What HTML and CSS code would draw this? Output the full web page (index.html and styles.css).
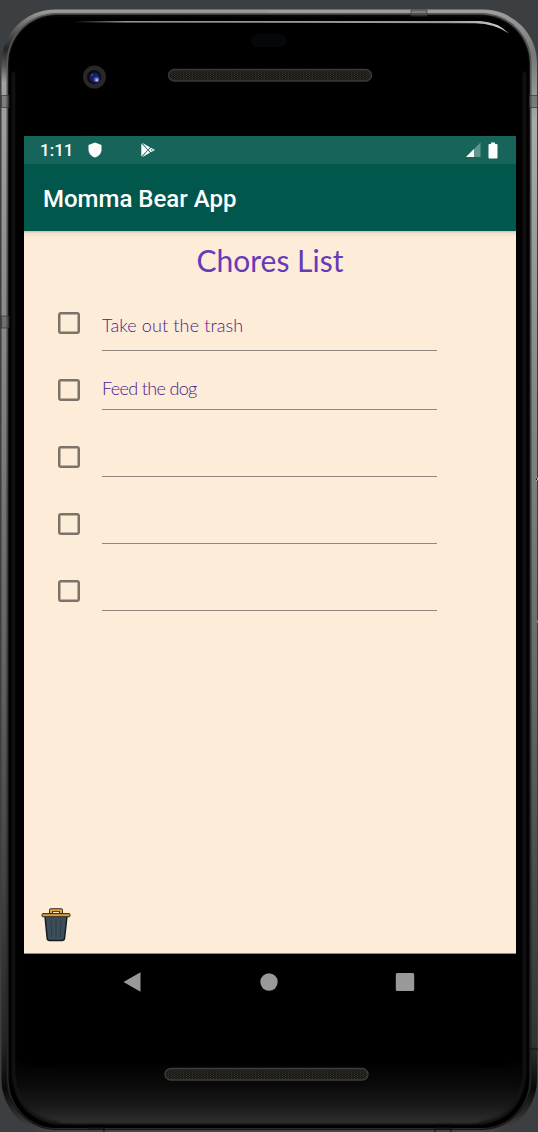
FILE: index.html
```html
<!DOCTYPE html>
<html lang="en">
<head>
<meta charset="utf-8">
<title>Momma Bear App</title>
<link rel="stylesheet" href="styles.css">
</head>
<body>
<div class="device">
  <svg class="shell" viewBox="0 0 538 1132" aria-hidden="true">
    <defs>
      <linearGradient id="rail" x1="0" y1="0" x2="0" y2="1">
        <stop offset="0" stop-color="#a0a09e"/><stop offset=".02" stop-color="#555"/><stop offset=".035" stop-color="#252525"/><stop offset=".05" stop-color="#555"/><stop offset=".065" stop-color="#a2a2a2"/><stop offset=".35" stop-color="#808080"/><stop offset=".6" stop-color="#606060"/><stop offset=".78" stop-color="#424242"/><stop offset=".92" stop-color="#252525"/><stop offset=".96" stop-color="#090909"/><stop offset="1" stop-color="#4a4746"/>
      </linearGradient>
      <linearGradient id="railRight" x1="0" y1="0" x2="0" y2="1">
        <stop offset="0" stop-color="#a0a09e"/><stop offset=".04" stop-color="#777"/><stop offset=".1" stop-color="#aaa"/><stop offset=".35" stop-color="#858585"/><stop offset=".6" stop-color="#686868"/><stop offset=".78" stop-color="#4a4a4a"/><stop offset=".92" stop-color="#333"/><stop offset=".96" stop-color="#090909"/><stop offset="1" stop-color="#4a4746"/>
      </linearGradient>
      <linearGradient id="inner" x1="0" y1="0" x2="0" y2="1">
        <stop offset="0" stop-color="#555"/><stop offset=".1" stop-color="#505050"/><stop offset=".6" stop-color="#303030"/><stop offset="1" stop-color="#161616"/>
      </linearGradient>
      <linearGradient id="chin" x1="0" y1="0" x2="0" y2="1">
        <stop offset="0" stop-color="#000"/><stop offset=".4" stop-color="#090909"/><stop offset=".75" stop-color="#1a1a1a"/><stop offset="1" stop-color="#303030"/>
      </linearGradient>
      <linearGradient id="shine" x1="0" y1="0" x2="1" y2="0">
        <stop offset="0" stop-color="#8e9292" stop-opacity="0"/><stop offset=".12" stop-color="#8e9292"/><stop offset=".85" stop-color="#969a9a"/><stop offset="1" stop-color="#c8d0ce"/>
      </linearGradient>
      <pattern id="mesh" width="3" height="2" patternUnits="userSpaceOnUse">
        <rect width="3" height="2" fill="#181714"/><path d="M.5 0v1M2 1v1" stroke="#393530" stroke-width="1"/>
      </pattern>
      <filter id="soft" x="-20%" y="-20%" width="140%" height="140%" color-interpolation-filters="sRGB"><feGaussianBlur stdDeviation="1.3"/></filter>
      <clipPath id="leftHalf"><rect width="269" height="1140"/></clipPath>
      <clipPath id="rightHalf"><rect x="269" width="269" height="1140"/></clipPath>
    </defs>
    <g clip-path="url(#leftHalf)"><rect x="1.5" y="9.5" width="535.5" height="1124" rx="54" fill="url(#rail)"/></g>
    <g clip-path="url(#rightHalf)"><rect x="1.5" y="9.5" width="535.5" height="1124" rx="54" fill="url(#railRight)"/></g>
    <rect x="6.5" y="13" width="525" height="1117" rx="50" fill="url(#inner)"/>
    <rect x="8" y="14.5" width="522" height="1114" rx="49" fill="#060606" stroke="#777" stroke-opacity=".35" stroke-width=".8"/>
    <rect x="9.5" y="17" width="519" height="1111" rx="47"/>
    <path d="M58 1065H480Q510 1072 524 1055V1080Q518 1124 470 1124H68Q20 1124 13 1080V1055Q28 1072 58 1065Z" fill="url(#chin)" filter="url(#soft)"/>
    <path d="M13.5 72V1074Q17 1117 58 1123M524.5 72V1074Q521 1117 480 1123" fill="none" stroke="#161616" stroke-width="3" filter="url(#soft)"/>
    <path d="M73 21H480Q498 22 509 33.5Q495 23.5 475 23.2L73 22.5Z" fill="url(#shine)"/>
    <path d="M1.5 95.500H9v12H1.500ZM1.500 316H9v12H1.500ZM529.500 95.500H538v12H529.500ZM411 10h16v6H411Z" fill="#555" fill-opacity=".45" stroke="#333" stroke-width=".7"/>
    <path d="M88 1128h16v4M435 1132v-4h16v4M530 1049h8" fill="none" stroke="#111"/>
    <path d="M536 477l2 2-2 2M538 620v3" stroke="#bbb" fill="#222"/>
    <rect x="251" y="34" width="36" height="13" rx="6.500" fill="#06070b"/>
    <circle cx="94.500" cy="77" r="11.500" fill="#292727"/>
    <circle cx="94" cy="77" r="7" fill="#0b0b14"/>
    <circle cx="94.500" cy="77.500" r="5" fill="#15205c"/>
    <circle cx="96.500" cy="79.500" r="2.800" fill="#4054b8"/><circle cx="96.800" cy="80" r="1.500" fill="#a4b4ff"/><circle cx="92" cy="75" r="1" fill="#3451b0"/>
    <rect x="168.500" y="69.500" width="203" height="11.500" rx="5.700" fill="url(#mesh)" stroke="#3c3936" stroke-width="1.300"/>
    <rect x="165" y="1068.500" width="203" height="11.500" rx="5.700" fill="url(#mesh)" stroke="#3c3c3a" stroke-width="1.300"/>
  </svg>

  <main class="screen">
    <div class="status-bar">
      <span class="clock">1:11</span>
      <svg class="shield" viewBox="0 0 14 16"><path d="M7 .5L13.500 3V7.500C13.500 11.500 10.500 14.500 7 15.500C3.500 14.500.5 11.500.5 7.500V3Z"/></svg>
      <svg class="play" viewBox="0 0 16 16"><path d="M1.300 1.500V14.500L7.500 8ZM2 .8L10 5.200 8 7.400ZM2 15.200L10 10.800 8 8.600ZM8.600 8L10.900 5.700 14.900 8 10.900 10.300Z"/><circle cx="11.800" cy="8" r=".8" fill="#17655a"/></svg>
      <svg class="signal" viewBox="0 0 16 16"><path d="M15.500 .5V15H1Z" opacity=".32"/><path d="M9 7V15H1Z"/></svg>
      <svg class="battery" viewBox="0 0 10 17"><path d="M3 .5h4V2h1.500q1 0 1 1V15.500q0 1-1 1h-7q-1 0-1-1V3q0-1 1-1H3Z"/></svg>
    </div>
    <header class="app-bar">Momma Bear App</header>
    <section class="content">
      <h1 class="title">Chores List</h1>
      <div class="chores">
        <div class="chore first"><span class="checkbox"></span><span class="field wide">Take out the trash</span></div>
        <div class="chore"><span class="checkbox"></span><span class="field tight">Feed the dog</span></div>
        <div class="chore"><span class="checkbox"></span><span class="field"></span></div>
        <div class="chore"><span class="checkbox"></span><span class="field"></span></div>
        <div class="chore"><span class="checkbox"></span><span class="field"></span></div>
      </div>
      <svg class="bin" viewBox="0 0 30 35">
        <path d="M4 9H26L23.500 31.500Q23.200 33.500 21 33.500H8.500Q6.500 33.500 6.200 31.500Z" fill="#3c4e5b" stroke="#131c22" stroke-width="1.500"/>
        <path d="M10 13l.8 17M15 13v17M20 13l-.8 17" fill="none" stroke="#2e3e49" stroke-width="1"/>
        <path d="M10 7V3.200H20V7" fill="none" stroke="#282116" stroke-width="3.800" stroke-linejoin="round"/>
        <path d="M10 7V3.200H20V7" fill="none" stroke="#e3a633" stroke-width="2" stroke-linejoin="round"/>
        <rect x="1" y="6.600" width="28" height="3.200" rx="1" fill="#c99b43" stroke="#332b1c" stroke-width="1"/>
      </svg>
    </section>
    <nav class="nav">
      <svg viewBox="0 0 20 22"><path d="M1.500 11L18.500 1.200V20.800Z"/></svg>
      <svg viewBox="0 0 20 22"><circle cx="10" cy="11" r="8.700"/></svg>
      <svg viewBox="0 0 20 22"><rect x=".8" y="2" width="18.400" height="18" rx="1.500"/></svg>
    </nav>
  </main>
</div>
</body>
</html>
```

FILE: styles.css
```css
* { box-sizing: border-box; }
body { margin: 0; background: #3c3f41; overflow: hidden; }
.device { position: relative; width: 538px; height: 1132px; padding: 136px 22px 0 24px; }
.shell { position: absolute; left: 0; top: 0; width: 538px; height: 1132px; }
.screen { position: relative; width: 492px; font-family: Roboto, sans-serif; }
.status-bar { display: flex; align-items: center; height: 28px; padding: 0 18px 0 16px; background: #17655a; color: #fff; }
.status-bar svg { fill: #fff; }
.clock { width: 48px; font-size: 17px; font-weight: 500; line-height: 28px; }
.shield { width: 14px; height: 16px; }
.play { width: 16px; height: 16px; margin-left: 38px; }
.signal { width: 16px; height: 16px; margin-left: auto; }
.battery { width: 10px; height: 17px; margin-left: 7px; }
.app-bar { height: 67px; padding: 2px 0 0 19px; background: #01574b; color: #fff; font-size: 24px; font-weight: 500; line-height: 67px; }
.content { display: flex; flex-direction: column; height: 723px; background: linear-gradient(#c7c0ad, #efe1cc 2px, #fcecd8 6px); border-bottom: 1px solid #94897d; font-family: "Coming Soon", Lato, sans-serif; }
.title { margin: 8px 0 0; height: 42px; text-align: center; color: #673ab7; font-size: 30px; font-weight: 400; line-height: 42px; }
.chores { padding: 22px 79px 0 33px; }
.chore { display: grid; grid-template-columns: 45px 335px; height: 67px; }
.checkbox { width: 22px; height: 22px; margin: 9px 0 0 1px; border: 2px solid #7b7268; border-radius: 3px; box-shadow: inset 0 0 0 .5px #7b7268; }
.field { height: 40px; border-bottom: 1px solid #90877c; color: #4a208c; font-size: 18px; font-weight: 300; line-height: 36px; }
.wide { letter-spacing: .12px; }
.tight { letter-spacing: -.65px; }
.first .field { height: 48px; line-height: 44px; }
.bin { width: 30px; height: 35px; margin: auto 0 11px 17px; }
.nav { display: flex; justify-content: space-between; align-items: center; height: 56px; padding: 0 101px 0 98px; background: #000; }
.nav svg { width: 20px; height: 22px; fill: #999; }
```
